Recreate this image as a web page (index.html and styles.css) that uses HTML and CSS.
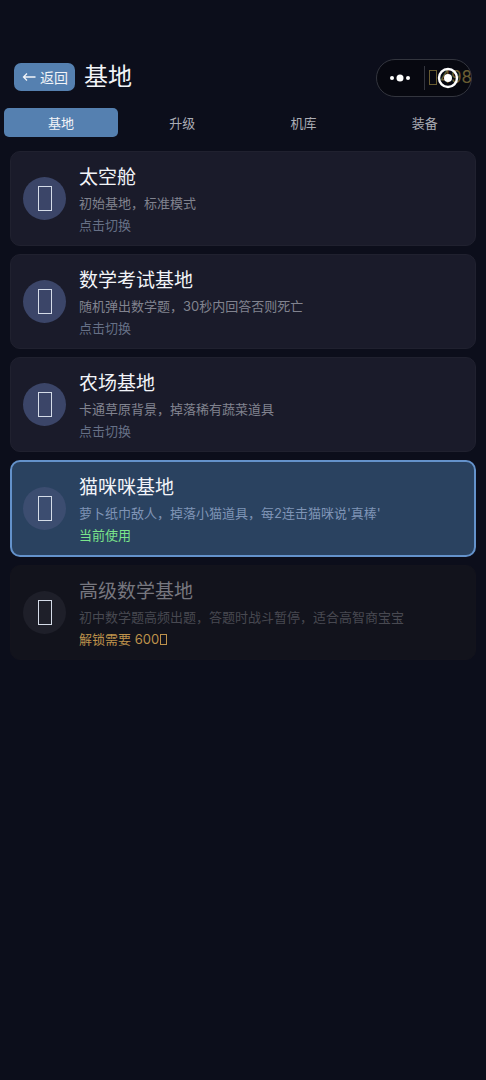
FILE: index.html
```html
<!DOCTYPE html>
<html lang="zh-CN">
<head>
<meta charset="utf-8">
<meta name="viewport" content="width=device-width, initial-scale=1">
<title>基地</title>
<link rel="stylesheet" href="styles.css">
</head>
<body>
<header class="header">
  <button class="back" type="button"><svg class="arrow" viewBox="0 0 14 10" aria-hidden="true"><path d="M13.5 5H1.5M5 1.5L1.5 5L5 8.5"/></svg>返回</button>
  <h1 class="title">基地</h1>
  <div class="coins"><span class="glyph glyph-coin"></span>498</div>
  <div class="capsule">
    <button class="capsule-btn" type="button" aria-label="更多"><svg width="22" height="10" viewBox="0 0 22 10"><circle cx="3" cy="5" r="2"/><circle cx="11" cy="5" r="3.5"/><circle cx="19" cy="5" r="2"/></svg></button>
    <button class="capsule-btn capsule-close" type="button" aria-label="关闭"><svg width="22" height="22" viewBox="0 0 22 22"><circle cx="11" cy="11" r="9" class="ring"/><circle cx="11" cy="11" r="4"/></svg></button>
  </div>
</header>
<nav class="tabs">
  <button class="tab tab-active" type="button">基地</button>
  <button class="tab" type="button">升级</button>
  <button class="tab" type="button">机库</button>
  <button class="tab" type="button">装备</button>
</nav>
<main class="list">
  <article class="card">
    <div class="icon"><span class="glyph glyph-icon"></span></div>
    <div class="info"><h2 class="name">太空舱</h2><p class="desc">初始基地，标准模式</p><p class="status">点击切换</p></div>
  </article>
  <article class="card">
    <div class="icon"><span class="glyph glyph-icon"></span></div>
    <div class="info"><h2 class="name">数学考试基地</h2><p class="desc">随机弹出数学题，30秒内回答否则死亡</p><p class="status">点击切换</p></div>
  </article>
  <article class="card">
    <div class="icon"><span class="glyph glyph-icon"></span></div>
    <div class="info"><h2 class="name">农场基地</h2><p class="desc">卡通草原背景，掉落稀有蔬菜道具</p><p class="status">点击切换</p></div>
  </article>
  <article class="card card-current">
    <div class="icon"><span class="glyph glyph-icon"></span></div>
    <div class="info"><h2 class="name">猫咪咪基地</h2><p class="desc">萝卜纸巾敌人，掉落小猫道具，每2连击猫咪说'真棒'</p><p class="status">当前使用</p></div>
  </article>
  <article class="card card-locked">
    <div class="icon"><span class="glyph glyph-icon"></span></div>
    <div class="info"><h2 class="name">高级数学基地</h2><p class="desc">初中数学题高频出题，答题时战斗暂停，适合高智商宝宝</p><p class="status">解锁需要 600<span class="glyph glyph-price"></span></p></div>
  </article>
</main>
</body>
</html>
```
FILE: styles.css
```css
* { box-sizing: border-box; }
body {
  margin: 0;
  min-height: 100vh;
  background: #0c0e1b;
  color: #f2f4f8;
  font-family: Inter, "Noto Sans CJK SC", sans-serif;
  font-size: 13px;
}
h1, h2, p { margin: 0; font-weight: 400; }
button { border: 0; padding: 0; font: inherit; color: inherit; background: none; }
.header {
  position: relative;
  display: flex;
  align-items: center;
  gap: 9px;
  padding: 57px 14px 11px;
}
.back {
  display: flex;
  align-items: center;
  gap: 4px;
  height: 28px;
  padding: 0 7px 0 8px;
  border-radius: 7px;
  background: #5580b0;
  font-size: 14px;
}
.arrow {
  width: 14px;
  height: 10px;
  fill: none;
  stroke: #f2f4f8;
  stroke-width: 1.3;
}
.title { font-size: 24px; line-height: 40px; }
.coins {
  display: flex;
  align-items: center;
  gap: 3px;
  margin-left: auto;
  font-size: 17px;
  line-height: 24px;
  color: #b09a52;
}
.glyph {
  display: inline-block;
  border: 1px solid currentColor;
}
.glyph-coin { width: 8px; height: 15px; }
.glyph-icon { width: 14px; height: 25px; border-color: #d5dce8; }
.glyph-price { width: 7px; height: 11px; margin-left: 1px; vertical-align: -1px; }
.capsule {
  position: absolute;
  top: 59px;
  right: 14px;
  display: flex;
  align-items: center;
  width: 96px;
  height: 38px;
  border: 1px solid #33353e;
  border-radius: 19px;
  background: rgba(0, 0, 0, 0.4);
}
.capsule-btn {
  flex: 1;
  display: flex;
  align-items: center;
  justify-content: center;
  height: 24px;
  fill: #fff;
}
.capsule-close { border-left: 1px solid #33353e; }
.ring { fill: none; stroke: #fff; stroke-width: 2.4; }
.tabs {
  display: grid;
  grid-template-columns: repeat(4, 1fr);
  gap: 7px;
  padding: 0 4px;
}
.tab {
  height: 29px;
  border-radius: 5px;
  color: #aaacb4;
}
.tab-active { background: #5580b0; color: #f2f4f8; }
.list {
  display: flex;
  flex-direction: column;
  gap: 8px;
  padding: 14px 10px;
}
.card {
  display: flex;
  align-items: center;
  gap: 13px;
  padding: 12px;
  border: 1px solid #20212f;
  border-radius: 10px;
  background: #1a1b2a;
}
.icon {
  display: flex;
  align-items: center;
  justify-content: center;
  flex: none;
  width: 43px;
  height: 43px;
  border-radius: 50%;
  background: #3b4568;
}
.name { font-size: 19px; line-height: 28px; }
.desc { line-height: 22px; color: #81838f; }
.status { line-height: 22px; color: #667086; }
.info { margin-bottom: -3px; }
.card-current {
  padding: 12px 11px;
  border: 2px solid #6492cb;
  background: #2a4260;
}
.card-current .icon { background: #3c4d70; }
.card-current .desc { color: #7f94b6; }
.card-current .status { color: #7be58b; }
.card-locked { border-color: #13131c; background: #12131c; }
.card-locked .icon { background: #1e1f29; }
.card-locked .name { color: #77777f; }
.card-locked .desc { color: #484951; }
.card-locked .status { color: #bd914b; }
```
